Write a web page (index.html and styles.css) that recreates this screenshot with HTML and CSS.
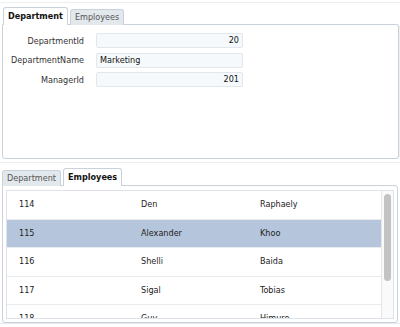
FILE: index.html
```html
<!DOCTYPE html>
<html>
<head>
<meta charset="utf-8">
<link rel="stylesheet" href="styles.css">
</head>
<body>
<div class="app">
  <section class="pane pane-top">
    <div class="tabs">
      <div class="tab active">Department</div>
      <div class="tab">Employees</div>
    </div>
    <div class="panel form-panel">
      <div class="form">
        <label class="lbl">DepartmentId</label>
        <div class="input num">20</div>
        <label class="lbl">DepartmentName</label>
        <div class="input">Marketing</div>
        <label class="lbl">ManagerId</label>
        <div class="input num">201</div>
      </div>
    </div>
  </section>
  <section class="pane pane-bottom">
    <div class="tabs">
      <div class="tab">Department</div>
      <div class="tab active">Employees</div>
    </div>
    <div class="panel grid-panel">
      <div class="table">
        <div class="rows">
          <div class="row"><span>114</span><span>Den</span><span>Raphaely</span></div>
          <div class="row sel"><span>115</span><span>Alexander</span><span>Khoo</span></div>
          <div class="row"><span>116</span><span>Shelli</span><span>Baida</span></div>
          <div class="row"><span>117</span><span>Sigal</span><span>Tobias</span></div>
          <div class="row"><span>118</span><span>Guy</span><span>Himuro</span></div>
        </div>
        <div class="scroll"><div class="thumb"></div></div>
      </div>
    </div>
  </section>
</div>
</body>
</html>
```

FILE: styles.css
```css
html, body {
  margin: 0;
  padding: 0;
  background: #ffffff;
}
body {
  width: 400px;
  height: 327px;
  overflow: hidden;
  font-family: "DejaVu Sans Condensed", "DejaVu Sans", sans-serif;
  font-size: 9px;
  color: #222;
}
.app {
  padding-top: 2px;
}
.pane {
  border-top: 1px solid #eceff2;
  padding: 4px 2px 0 2px;
}
.pane-top {
  width: 397px;
}
.pane-bottom {
  margin-top: 3px;
  padding-top: 5px;
  width: 396px;
  border-bottom: 1px solid #e6e9ed;
}
.tabs {
  display: flex;
  align-items: flex-end;
  gap: 2px;
  position: relative;
  z-index: 1;
  margin-bottom: -1px;
}
.pane-top .tabs { padding-left: 1px; }
.tab {
  height: 15px;
  line-height: 15px;
  padding: 0 4px;
  background: #e3e8ed;
  border: 1px solid #c9d2db;
  border-bottom: 0;
  border-radius: 3px 3px 0 0;
  color: #555;
}
.tab.active {
  height: 17px;
  line-height: 17px;
  background: #fff;
  font-weight: bold;
  color: #111;
}
.panel {
  border: 1px solid #c9d2db;
  border-radius: 0 3px 3px 3px;
  background: #fff;
}
.form-panel {
  height: 133px;
  box-shadow: 1px 0 0 #eef1f4;
}
.form {
  display: grid;
  grid-template-columns: 81px 147px;
  column-gap: 12px;
  row-gap: 4.5px;
  padding-top: 8px;
  align-items: center;
}
.lbl {
  text-align: right;
  color: #333;
}
.input {
  height: 13px;
  line-height: 13px;
  border: 1px solid #e1e7ed;
  border-radius: 2px;
  background: #f6f9fc;
  padding: 0 3px;
  color: #111;
}
.input.num { text-align: right; }
.grid-panel {
  padding: 4px 3px 0 3px;
  box-sizing: border-box;
  height: 138px;
}
.table {
  display: flex;
  height: 127px;
  border: 1px solid #dde3e9;
  overflow: hidden;
}
.rows {
  flex: 1;
}
.row {
  display: grid;
  grid-template-columns: 122px 119px 1fr;
  height: 27.5px;
  line-height: 27.5px;
  border-bottom: 1px solid #e8ecef;
  padding-left: 12px;
  color: #222;
}
.row.sel {
  background: #b5c6dc;
}
.scroll {
  border-left: 1px solid #e4e6e8;
  background: #fafafa;
  padding: 3px 0 0 2px;
  box-sizing: border-box;
  width: 12px;
}
.thumb {
  width: 7px;
  height: 87px;
  border-radius: 4px;
  background: #c3c3c3;
}
```
